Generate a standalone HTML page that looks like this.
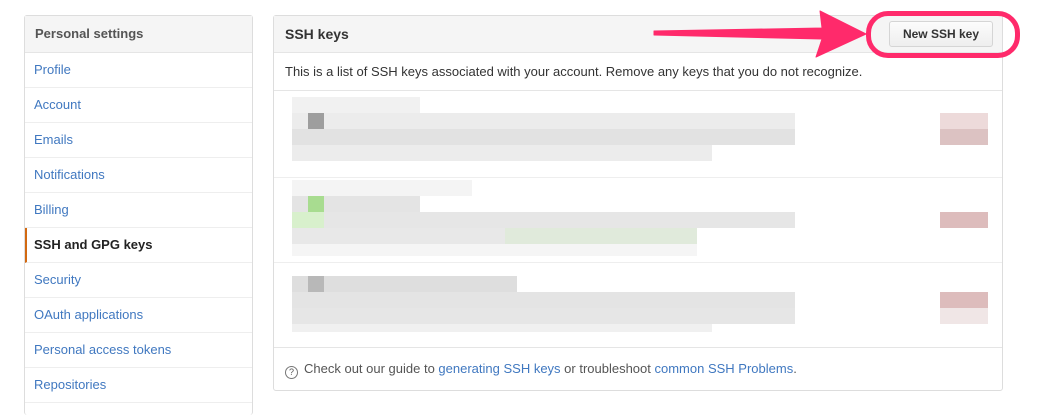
<!DOCTYPE html>
<html><head><meta charset="utf-8"><style>
*{box-sizing:border-box;margin:0;padding:0}
body{width:1037px;height:406px;background:#fff;font-family:"Liberation Sans",Arial,sans-serif;font-size:13px;position:relative;overflow:hidden;color:#333}
.side{position:absolute;left:24px;top:15px;width:229px;border:1px solid #ddd;border-radius:3px;border-bottom:none;height:400px}
.side .h{height:37px;background:#f5f5f5;border-bottom:1px solid #e5e5e5;font-weight:bold;color:#555;padding:10px 10px;font-size:13px}
.side .i{height:35px;border-bottom:1px solid #eee;color:#4078c0;padding:9px 9px;font-size:13px}
.side .a{color:#222;font-weight:bold;border-left:2px solid #d26911;padding-left:7px}
.panel{position:absolute;left:273px;top:15px;width:730px;height:376px;border:1px solid #ddd;border-radius:3px}
.ph{height:37px;background:#f5f5f5;border-bottom:1px solid #e5e5e5;padding:10px 11px;font-size:14px;font-weight:bold;color:#333}
.desc{height:38px;border-bottom:1px solid #e5e5e5;padding:11px 11px;font-size:13px;color:#333}
.key{position:absolute;left:0;width:728px;border-bottom:1px solid #eee}
.foot{position:absolute;left:0;top:331px;width:728px;height:44px;border-top:1px solid #e5e5e5;padding:13px 11px;font-size:13px;color:#555}
.foot a{color:#4078c0;text-decoration:none}
.q{display:inline-block;width:13px;height:13px;border:1px solid #777;border-radius:50%;font-size:9px;text-align:center;line-height:11px;margin-right:6px;vertical-align:-2px}
.btn{position:absolute;left:889px;top:21px;width:104px;height:26px;border:1px solid #d5d5d5;border-radius:3px;background:linear-gradient(#fcfcfc,#eee);font-weight:bold;font-size:12px;text-align:center;line-height:24px;color:#333}
.oval{position:absolute;left:866px;top:11px;width:154px;height:47px;border:5px solid #ff2a6b;border-radius:22px}
.b{position:absolute}
</style></head><body>
<div class="side">
<div class="h">Personal settings</div>
<div class="i">Profile</div><div class="i">Account</div><div class="i">Emails</div><div class="i">Notifications</div><div class="i">Billing</div>
<div class="i a">SSH and GPG keys</div>
<div class="i">Security</div><div class="i">OAuth applications</div><div class="i">Personal access tokens</div><div class="i">Repositories</div>
</div>
<div class="panel">
<div class="ph">SSH keys</div>
<div class="desc">This is a list of SSH keys associated with your account. Remove any keys that you do not recognize.</div>
<div class="key" style="top:75px;height:87px"></div>
<div class="key" style="top:162px;height:85px"></div>
<div class="foot"><span class="q">?</span>Check out our guide to <a>generating SSH keys</a> or troubleshoot <a>common SSH Problems</a>.</div>
</div>
<div class="b" style="left:292px;top:97px;width:128px;height:16px;background:#f1f1f1"></div>
<div class="b" style="left:292px;top:113px;width:503px;height:16px;background:#ececec"></div>
<div class="b" style="left:308px;top:113px;width:16px;height:16px;background:#9e9e9e"></div>
<div class="b" style="left:292px;top:129px;width:503px;height:16px;background:#e2e2e2"></div>
<div class="b" style="left:292px;top:145px;width:420px;height:16px;background:#ececec"></div>
<div class="b" style="left:940px;top:113px;width:48px;height:16px;background:#eddada"></div>
<div class="b" style="left:940px;top:129px;width:48px;height:16px;background:#dcc2c2"></div>
<div class="b" style="left:292px;top:180px;width:180px;height:16px;background:#f4f4f4"></div>
<div class="b" style="left:292px;top:196px;width:128px;height:16px;background:#e4e4e4"></div>
<div class="b" style="left:308px;top:196px;width:16px;height:16px;background:#a8dc90"></div>
<div class="b" style="left:292px;top:212px;width:503px;height:16px;background:#e6e6e6"></div>
<div class="b" style="left:292px;top:212px;width:32px;height:16px;background:#d8f0cc"></div>
<div class="b" style="left:292px;top:228px;width:405px;height:16px;background:#e8e8e8"></div>
<div class="b" style="left:505px;top:228px;width:192px;height:16px;background:#e0eadb"></div>
<div class="b" style="left:292px;top:244px;width:405px;height:12px;background:#f5f5f5"></div>
<div class="b" style="left:940px;top:212px;width:48px;height:16px;background:#ddbcbc"></div>
<div class="b" style="left:292px;top:276px;width:225px;height:16px;background:#dedede"></div>
<div class="b" style="left:308px;top:276px;width:16px;height:32px;background:#b8b8b8"></div>
<div class="b" style="left:292px;top:292px;width:503px;height:16px;background:#e4e4e4"></div>
<div class="b" style="left:292px;top:308px;width:503px;height:16px;background:#e6e6e6"></div>
<div class="b" style="left:292px;top:324px;width:420px;height:8px;background:#f0f0f0"></div>
<div class="b" style="left:940px;top:292px;width:48px;height:16px;background:#ddbcbc"></div>
<div class="b" style="left:940px;top:308px;width:48px;height:16px;background:#f0e6e6"></div>
<div class="btn">New SSH key</div>
<div class="oval"></div>
<svg class="b" style="left:0;top:0" width="1037" height="406"><polygon points="654,31 822,28 820,11 866,34 816,57 822,39 654,35" fill="#ff2a6b" stroke="#ff2a6b" stroke-width="1" stroke-linejoin="round"/></svg>
</body></html>
